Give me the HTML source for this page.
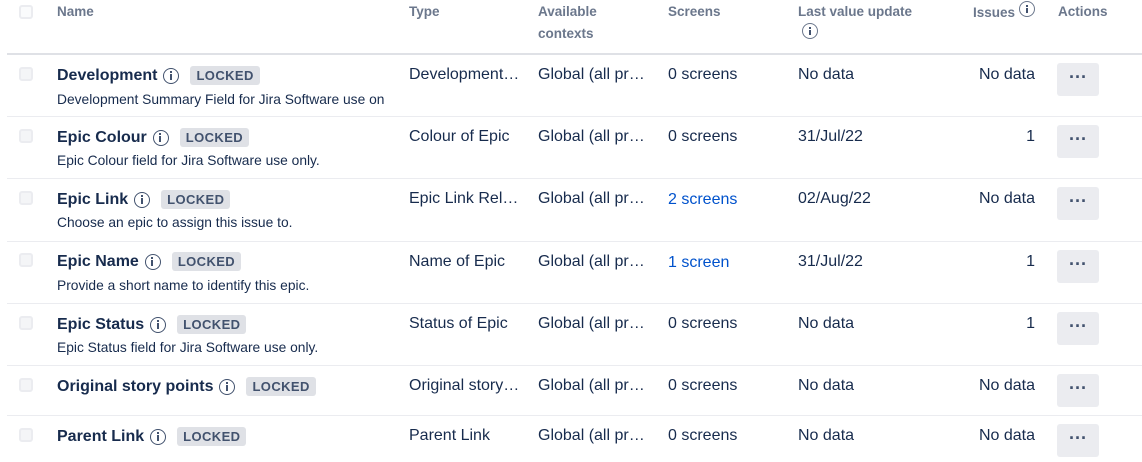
<!DOCTYPE html>
<html><head><meta charset="utf-8"><style>
*{box-sizing:border-box;margin:0;padding:0}
body{width:1142px;height:462px;background:#fff;font-family:"Liberation Sans",Arial,sans-serif;color:#172b4d;position:relative;overflow:hidden}
.a{position:absolute;white-space:nowrap}
.h{font-size:13.5px;font-weight:bold;color:#6b778c;line-height:22px}
.cb{position:absolute;left:19px;width:14px;height:14px;border:2px solid #ebecf0;background:#f4f5f7;border-radius:3px}
.hl{position:absolute;left:7px;right:0;height:2px;background:#dfe1e6;top:53px}
.rl{position:absolute;left:7px;right:0;height:1px;background:#ebecf0}
.t{font-size:16px;line-height:18px}
.nm{font-weight:bold;font-size:16px;display:flex;align-items:center;line-height:18px}
.i{display:inline-block;width:16px;height:16px;border:1.5px solid #42526e;border-radius:50%;margin-left:6px;position:relative}
.i:before{content:"";position:absolute;left:5.5px;top:5.5px;width:2px;height:5.5px;background:#42526e}
.i:after{content:"";position:absolute;left:5.5px;top:2.5px;width:2px;height:2px;background:#42526e}
.lk{display:inline-block;margin-left:11px;background:#dfe1e6;color:#42526e;font-size:13px;font-weight:bold;line-height:19px;padding:0 6px;border-radius:3px;letter-spacing:.4px}
.d{font-size:13.8px;color:#172b4d;line-height:16px}
.btn{position:absolute;left:1057px;width:42px;height:33px;background:#ebecf0;border-radius:3px;text-align:center;font-weight:bold;font-size:18px;line-height:28px;color:#42526e}
.lnk{color:#0052cc}
</style></head><body>
<div class="cb" style="top:5px;background:#fafbfc"></div>
<div class="a h" style="left:57px;top:1px">Name</div>
<div class="a h" style="left:409px;top:1px">Type</div>
<div class="a h" style="left:538px;top:1px">Available<br>contexts</div>
<div class="a h" style="left:668px;top:1px">Screens</div>
<div class="a h" style="left:798px;top:1px">Last value update<br><span class="i" style="margin-left:4px;border-color:#6b778c"></span></div>
<div class="a h" style="left:973px;top:1px">Issues<span class="i" style="margin-left:4px;border-color:#6b778c"></span></div>
<div class="a h" style="left:1058px;top:1px">Actions</div>
<div class="hl"></div>

<div class="cb" style="top:67px"></div>
<div class="a nm" style="left:57px;top:66px">Development<span class="i"></span><span class="lk">LOCKED</span></div>
<div class="a d" style="left:57px;top:92px">Development Summary Field for Jira Software use on</div>
<div class="a t" style="left:409px;top:66px">Development…</div>
<div class="a t" style="left:538px;top:66px">Global (all pr…</div>
<div class="a t" style="left:668px;top:66px">0 screens</div>
<div class="a t" style="left:798px;top:66px">No data</div>
<div class="a t" style="right:107px;top:66px">No data</div>
<div class="btn" style="top:63px">···</div>
<div class="rl" style="top:116px"></div>

<div class="cb" style="top:129px"></div>
<div class="a nm" style="left:57px;top:128px">Epic Colour<span class="i"></span><span class="lk">LOCKED</span></div>
<div class="a d" style="left:57px;top:153px">Epic Colour field for Jira Software use only.</div>
<div class="a t" style="left:409px;top:128px">Colour of Epic</div>
<div class="a t" style="left:538px;top:128px">Global (all pr…</div>
<div class="a t" style="left:668px;top:128px">0 screens</div>
<div class="a t" style="left:798px;top:128px">31/Jul/22</div>
<div class="a t" style="right:107px;top:128px">1</div>
<div class="btn" style="top:125px">···</div>
<div class="rl" style="top:178px"></div>

<div class="cb" style="top:191px"></div>
<div class="a nm" style="left:57px;top:190px">Epic Link<span class="i"></span><span class="lk">LOCKED</span></div>
<div class="a d" style="left:57px;top:215px">Choose an epic to assign this issue to.</div>
<div class="a t" style="left:409px;top:190px">Epic Link Rel…</div>
<div class="a t" style="left:538px;top:190px">Global (all pr…</div>
<div class="a t lnk" style="left:668px;top:191px">2 screens</div>
<div class="a t" style="left:798px;top:190px">02/Aug/22</div>
<div class="a t" style="right:107px;top:190px">No data</div>
<div class="btn" style="top:187px">···</div>
<div class="rl" style="top:241px"></div>

<div class="cb" style="top:253px"></div>
<div class="a nm" style="left:57px;top:252px">Epic Name<span class="i"></span><span class="lk">LOCKED</span></div>
<div class="a d" style="left:57px;top:278px">Provide a short name to identify this epic.</div>
<div class="a t" style="left:409px;top:253px">Name of Epic</div>
<div class="a t" style="left:538px;top:253px">Global (all pr…</div>
<div class="a t lnk" style="left:668px;top:254px">1 screen</div>
<div class="a t" style="left:798px;top:253px">31/Jul/22</div>
<div class="a t" style="right:107px;top:253px">1</div>
<div class="btn" style="top:250px">···</div>
<div class="rl" style="top:303px"></div>

<div class="cb" style="top:316px"></div>
<div class="a nm" style="left:57px;top:315px">Epic Status<span class="i"></span><span class="lk">LOCKED</span></div>
<div class="a d" style="left:57px;top:340px">Epic Status field for Jira Software use only.</div>
<div class="a t" style="left:409px;top:315px">Status of Epic</div>
<div class="a t" style="left:538px;top:315px">Global (all pr…</div>
<div class="a t" style="left:668px;top:315px">0 screens</div>
<div class="a t" style="left:798px;top:315px">No data</div>
<div class="a t" style="right:107px;top:315px">1</div>
<div class="btn" style="top:312px">···</div>
<div class="rl" style="top:365px"></div>

<div class="cb" style="top:378px"></div>
<div class="a nm" style="left:57px;top:377px">Original story points<span class="i"></span><span class="lk">LOCKED</span></div>
<div class="a t" style="left:409px;top:377px">Original story…</div>
<div class="a t" style="left:538px;top:377px">Global (all pr…</div>
<div class="a t" style="left:668px;top:377px">0 screens</div>
<div class="a t" style="left:798px;top:377px">No data</div>
<div class="a t" style="right:107px;top:377px">No data</div>
<div class="btn" style="top:374px">···</div>
<div class="rl" style="top:415px"></div>

<div class="cb" style="top:428px"></div>
<div class="a nm" style="left:57px;top:427px">Parent Link<span class="i"></span><span class="lk">LOCKED</span></div>
<div class="a t" style="left:409px;top:427px">Parent Link</div>
<div class="a t" style="left:538px;top:427px">Global (all pr…</div>
<div class="a t" style="left:668px;top:427px">0 screens</div>
<div class="a t" style="left:798px;top:427px">No data</div>
<div class="a t" style="right:107px;top:427px">No data</div>
<div class="btn" style="top:424px">···</div>
</body></html>
